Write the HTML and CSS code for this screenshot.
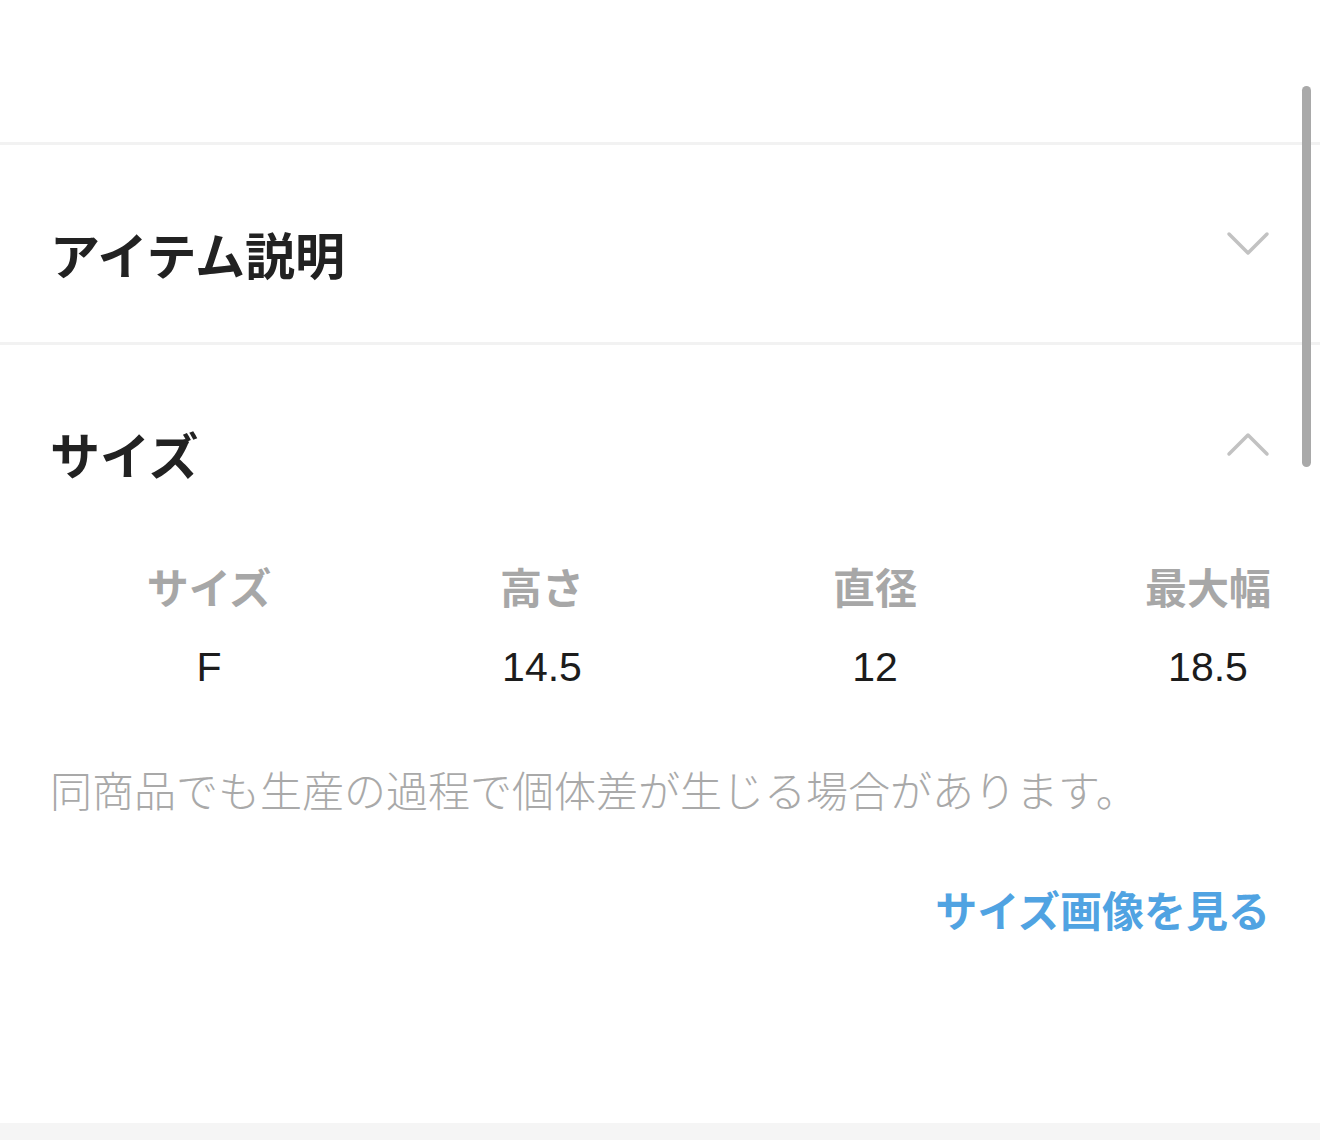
FILE: index.html
```html
<!DOCTYPE html>
<html lang="ja">
<head>
  <meta charset="UTF-8" />
  <meta name="viewport" content="width=device-width, initial-scale=1.0"/>
  <title>アイテム詳細</title>
  <link rel="stylesheet" href="styles.css">
</head>
<body>

  <div class="top-space"></div>

  <section class="panel">
    <div class="panel-head">
      <h2>アイテム説明</h2>
      <svg class="chevron" viewBox="0 0 44 26" width="44" height="26">
        <path d="M3 3 L22 22 L41 3" />
      </svg>
    </div>
  </section>

  <section class="panel open">
    <div class="panel-head">
      <h2>サイズ</h2>
      <svg class="chevron up" viewBox="0 0 44 26" width="44" height="26">
        <path d="M3 23 L22 4 L41 23" />
      </svg>
    </div>

    <div class="size-table">
      <div class="size-row labels">
        <span>サイズ</span>
        <span>高さ</span>
        <span>直径</span>
        <span>最大幅</span>
      </div>
      <div class="size-row values">
        <span>F</span>
        <span>14.5</span>
        <span>12</span>
        <span>18.5</span>
      </div>
    </div>

    <p class="size-note">同商品でも生産の過程で個体差が生じる場合があります。</p>

    <div class="size-link-wrap">
      <a class="size-link" href="#">サイズ画像を見る</a>
    </div>
  </section>

  <div class="bottom-band"></div>

  <div class="scrollbar"></div>

</body>
</html>
```

FILE: styles.css
```css
body {
  font-family: "Noto Sans CJK JP", "Liberation Sans", sans-serif;
  background-color: #fff;
  color: #222;
  margin: 0;
  overflow: hidden;
}

.top-space {
  height: 142px;
  border-bottom: 3px solid #f2f2f2;
}

.panel {
  padding: 0 50px;
  border-bottom: 3px solid #f2f2f2;
}

.panel.open {
  border-bottom: none;
  padding-bottom: 191px;
}

.panel-head {
  display: flex;
  justify-content: space-between;
  align-items: flex-start;
  padding: 83px 0 64px;
}

.panel.open .panel-head {
  padding: 83px 0 0;
}

.panel-head h2 {
  margin: 0;
  font-size: 50px;
  line-height: 50px;
  font-weight: 700;
  color: #222;
}

.chevron {
  display: block;
  margin-top: 3px;
  fill: none;
  stroke: #c2c2c2;
  stroke-width: 3.5;
  stroke-linecap: round;
  stroke-linejoin: round;
}

.size-table {
  margin-top: 87px;
  padding-left: 98px;
  padding-right: 1px;
}

.size-row {
  display: grid;
  grid-template-columns: repeat(4, 122px);
  justify-content: space-between;
  text-align: center;
  white-space: nowrap;
}

.size-row span {
  justify-self: center;
}

.size-row.labels {
  font-size: 42px;
  line-height: 42px;
  font-weight: 700;
  color: #a7a7a7;
}

.size-row.values {
  margin-top: 40px;
  font-family: "Liberation Sans", "Noto Sans CJK JP", sans-serif;
  font-size: 41px;
  line-height: 41px;
  color: #1c1c1c;
}

.size-note {
  margin: 80px 0 0;
  font-size: 42px;
  line-height: 42px;
  font-weight: 300;
  color: #a9a9a9;
  white-space: nowrap;
}

.size-link-wrap {
  margin-top: 78px;
  text-align: right;
}

.size-link {
  font-size: 42px;
  line-height: 42px;
  font-weight: 700;
  color: #50a3e2;
  text-decoration: none;
  display: inline-block;
}

.bottom-band {
  height: 20px;
  background-color: #f5f5f5;
}

.scrollbar {
  position: absolute;
  top: 86px;
  right: 9px;
  width: 9px;
  height: 381px;
  border-radius: 5px;
  background-color: #a9a9a9;
}
```
